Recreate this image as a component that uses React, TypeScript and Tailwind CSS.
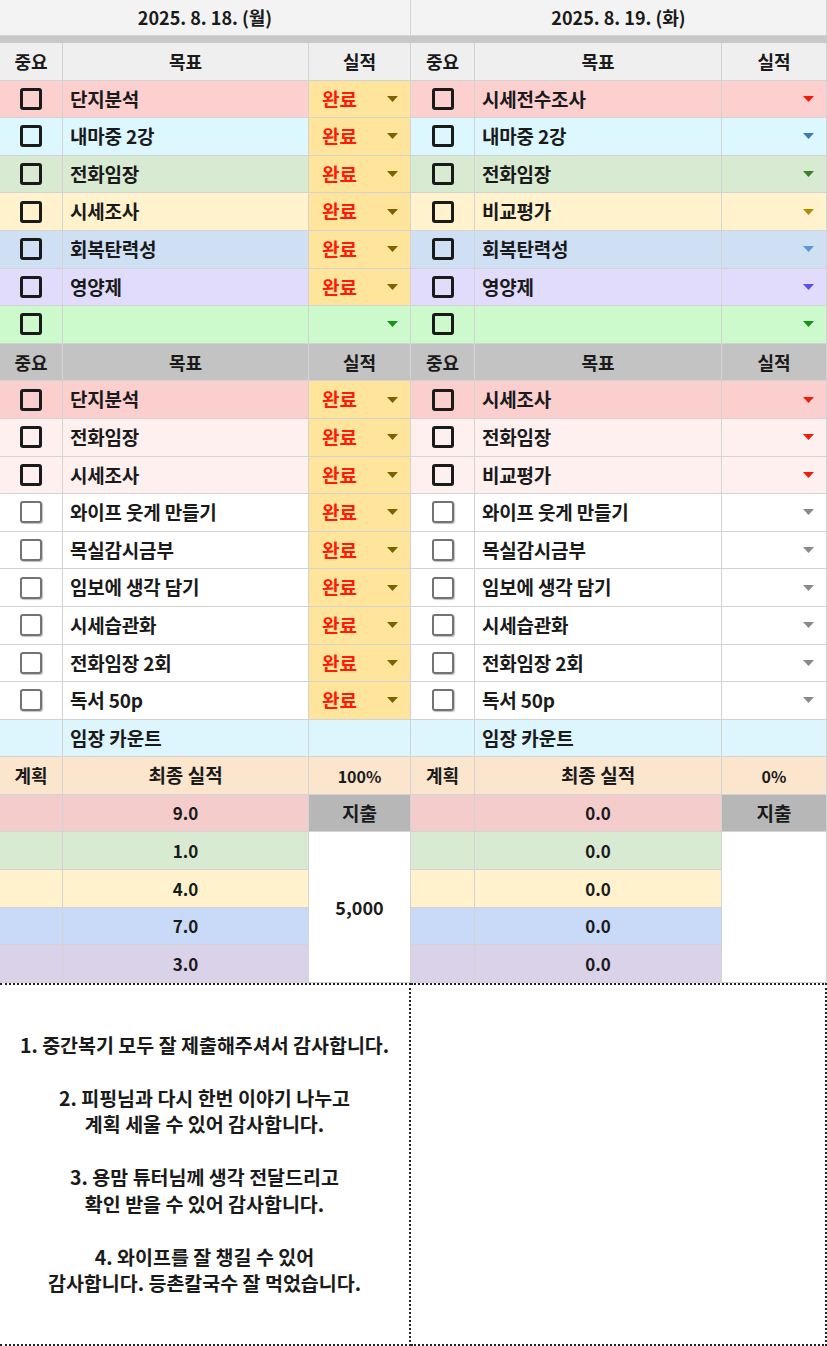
import React from "react";

type Row = {
  goal: string;
  bg: string;
  dark: boolean;
  done: boolean;
  arrow: string;
  resultBg?: string;
};

const FONT = "font-['Noto_Sans_CJK_KR','Noto_Sans',sans-serif]";
const LINE = "border-[#d3d3d3]";

const Checkbox = ({ dark }: { dark: boolean }) =>
  dark ? (
    <div className="w-[22px] h-[22px] rounded-[3px] border-[3px] border-[#1a1a1a]" />
  ) : (
    <div className="w-[22px] h-[22px] rounded-[3px] border-[2.5px] border-[#737373] shadow-[1px_1px_1px_rgba(0,0,0,0.25)]" />
  );

const Arrow = ({ color }: { color: string }) => (
  <svg width="11" height="6" viewBox="0 0 11 6" className="shrink-0">
    <path d="M0 0 L11 0 L5.5 6 Z" fill={color} />
  </svg>
);

const HeaderRow = ({ bg, cols }: { bg: string; cols: string }) => (
  <div className={`grid ${cols} h-[37.6px]`} style={{ background: bg }}>
    <div className={`flex items-center justify-center border-r border-b ${LINE} text-[18px] font-bold`}>중요</div>
    <div className={`flex items-center justify-center border-r border-b ${LINE} text-[18px] font-bold`}>목표</div>
    <div className={`flex items-center justify-center border-r border-b ${LINE} text-[18px] font-bold`}>실적</div>
  </div>
);

const GoalRow = ({ row, cols }: { row: Row; cols: string }) => (
  <div className={`grid ${cols} h-[37.6px]`} style={{ background: row.bg }}>
    <div className={`flex items-center justify-center border-r border-b ${LINE}`}>
      <Checkbox dark={row.dark} />
    </div>
    <div className={`flex items-center pl-[7px] border-r border-b ${LINE} text-[19px] font-bold tracking-[-0.2px] whitespace-pre`}>
      {row.goal}
    </div>
    <div
      className={`flex items-center justify-between pl-[13px] pr-[12px] border-r border-b ${LINE}`}
      style={{ background: row.done ? "#ffe59b" : row.resultBg ?? row.bg }}
    >
      <span className="text-[19px] font-bold text-[#ff1a0a]">{row.done ? "완료" : ""}</span>
      <Arrow color={row.arrow} />
    </div>
  </div>
);

const Panel = ({
  date,
  cols,
  top,
  bottom,
  percent,
  plans,
  expense,
  children,
}: {
  date: string;
  cols: string;
  top: Row[];
  bottom: Row[];
  percent: string;
  plans: string[];
  expense: string;
  children?: React.ReactNode;
}) => {
  const planColors = ["#d9ead3", "#fff2cc", "#c9daf8", "#d9d2e9"];
  return (
    <div className="flex flex-col">
      <div className={`h-[36px] flex items-center justify-center bg-[#f3f3f3] border-r border-b ${LINE} text-[18px] font-bold`}>
        {date}
      </div>
      <div className="h-[7px] bg-[#c8c8c8]" />
      <HeaderRow bg="#efefef" cols={cols} />
      {top.map((r, i) => (
        <GoalRow key={`t${i}`} row={r} cols={cols} />
      ))}
      <HeaderRow bg="#c3c3c3" cols={cols} />
      {bottom.map((r, i) => (
        <GoalRow key={`b${i}`} row={r} cols={cols} />
      ))}
      <div className={`grid ${cols} h-[37.6px] bg-[#ddf5fd]`}>
        <div className={`border-r border-b ${LINE}`} />
        <div className={`flex items-center pl-[7px] border-r border-b ${LINE} text-[19px] font-bold`}>임장 카운트</div>
        <div className={`border-r border-b ${LINE}`} />
      </div>
      <div className={`grid ${cols} h-[37.6px] bg-[#fce5cd]`}>
        <div className={`flex items-center justify-center border-r border-b ${LINE} text-[18px] font-bold`}>계획</div>
        <div className={`flex items-center justify-center border-r border-b ${LINE} text-[19px] font-bold`}>최종 실적</div>
        <div className={`flex items-center justify-center border-r border-b ${LINE} text-[16px] font-semibold`}>{percent}</div>
      </div>
      <div className={`grid ${cols} h-[37.6px] bg-[#f4cccc]`}>
        <div className={`border-r border-b ${LINE}`} />
        <div className={`flex items-center justify-center border-r border-b ${LINE} text-[17px] font-semibold`}>{plans[0]}</div>
        <div className={`flex items-center justify-center border-r border-b ${LINE} bg-[#b7b7b7] text-[19px] font-bold`}>지출</div>
      </div>
      <div className={`grid ${cols} grid-rows-[repeat(4,37.6px)]`}>
        {plans.slice(1).map((p, i) => (
          <React.Fragment key={i}>
            <div
              className={`border-r border-b ${LINE} col-start-1`}
              style={{ background: planColors[i], gridRow: i + 1 }}
            />
            <div
              className={`flex items-center justify-center border-r border-b ${LINE} col-start-2 text-[17px] font-semibold`}
              style={{ background: planColors[i], gridRow: i + 1 }}
            >
              {p}
            </div>
          </React.Fragment>
        ))}
        <div className={`col-start-3 row-start-1 row-span-4 flex items-center justify-center bg-white border-r border-b ${LINE} text-[18px] font-semibold`}>
          {expense}
        </div>
      </div>
      <div className="h-[363px] border-t-2 border-r-2 border-b-2 border-dotted border-[#222] flex items-center justify-center">
        {children}
      </div>
    </div>
  );
};

const whiteGoals = ["와이프 웃게 만들기", "목실감시금부", "임보에 생각 담기", "시세습관화", "전화임장 2회", "독서 50p"];

const leftTop: Row[] = [
  { goal: "단지분석", bg: "#fdd0d0", dark: true, done: true, arrow: "#7f6000" },
  { goal: "내마중 2강", bg: "#dcf7fd", dark: true, done: true, arrow: "#7f6000" },
  { goal: "전화임장", bg: "#d9ead3", dark: true, done: true, arrow: "#7f6000" },
  { goal: "시세조사", bg: "#fff2cc", dark: true, done: true, arrow: "#7f6000" },
  { goal: "회복탄력성", bg: "#cfe0f5", dark: true, done: true, arrow: "#7f6000" },
  { goal: "영양제", bg: "#e1dcfc", dark: true, done: true, arrow: "#7f6000" },
  { goal: "", bg: "#cdfacd", dark: true, done: false, arrow: "#119611" },
];

const rightTop: Row[] = [
  { goal: "시세전수조사", bg: "#fdd0d0", dark: true, done: false, arrow: "#f21c0c" },
  { goal: "내마중 2강", bg: "#dcf7fd", dark: true, done: false, arrow: "#3d78b8" },
  { goal: "전화임장", bg: "#d9ead3", dark: true, done: false, arrow: "#3f7f2a" },
  { goal: "비교평가", bg: "#fff2cc", dark: true, done: false, arrow: "#b88a00" },
  { goal: "회복탄력성", bg: "#cfe0f5", dark: true, done: false, arrow: "#5d96d6" },
  { goal: "영양제", bg: "#e1dcfc", dark: true, done: false, arrow: "#5a4ff0" },
  { goal: "", bg: "#cdfacd", dark: true, done: false, arrow: "#119611" },
];

const leftBottom: Row[] = [
  { goal: "단지분석", bg: "#fccfcf", dark: true, done: true, arrow: "#7f6000" },
  { goal: "전화임장", bg: "#fff0f0", dark: true, done: true, arrow: "#7f6000" },
  { goal: "시세조사", bg: "#fff0f0", dark: true, done: true, arrow: "#7f6000" },
  ...whiteGoals.map((g) => ({ goal: g, bg: "#ffffff", dark: false, done: true, arrow: "#7f6000" })),
];

const rightBottom: Row[] = [
  { goal: "시세조사", bg: "#fccfcf", dark: true, done: false, arrow: "#f21c0c" },
  { goal: "전화임장", bg: "#fff0f0", dark: true, done: false, arrow: "#f21c0c" },
  { goal: "비교평가", bg: "#fff0f0", dark: true, done: false, arrow: "#f21c0c" },
  ...whiteGoals.map((g) => ({ goal: g, bg: "#ffffff", dark: false, done: false, arrow: "#8a8a8a" })),
];

export default function App() {
  return (
    <div className={`w-[827px] h-[1346px] overflow-hidden bg-white text-[#1a1a1a] ${FONT}`}>
      <div className="grid grid-cols-[411px_416px]">
        <Panel
          date="2025. 8. 18. (월)"
          cols="grid-cols-[63px_246px_102px]"
          top={leftTop}
          bottom={leftBottom}
          percent="100%"
          plans={["9.0", "1.0", "4.0", "7.0", "3.0"]}
          expense="5,000"
        >
          <div className="text-center text-[19.5px] leading-[26.5px] font-bold whitespace-nowrap">
            <p>1. 중간복기 모두 잘 제출해주셔서 감사합니다.</p>
            <p>&nbsp;</p>
            <p>2. 피핑님과 다시 한번 이야기 나누고</p>
            <p>계획 세울 수 있어 감사합니다.</p>
            <p>&nbsp;</p>
            <p>3. 용맘 튜터님께 생각 전달드리고</p>
            <p>확인 받을 수 있어 감사합니다.</p>
            <p>&nbsp;</p>
            <p>4. 와이프를 잘 챙길 수 있어</p>
            <p>감사합니다. 등촌칼국수 잘 먹었습니다.</p>
          </div>
        </Panel>
        <Panel
          date="2025. 8. 19. (화)"
          cols="grid-cols-[64px_247px_105px]"
          top={rightTop}
          bottom={rightBottom}
          percent="0%"
          plans={["0.0", "0.0", "0.0", "0.0", "0.0"]}
          expense=""
        />
      </div>
    </div>
  );
}
